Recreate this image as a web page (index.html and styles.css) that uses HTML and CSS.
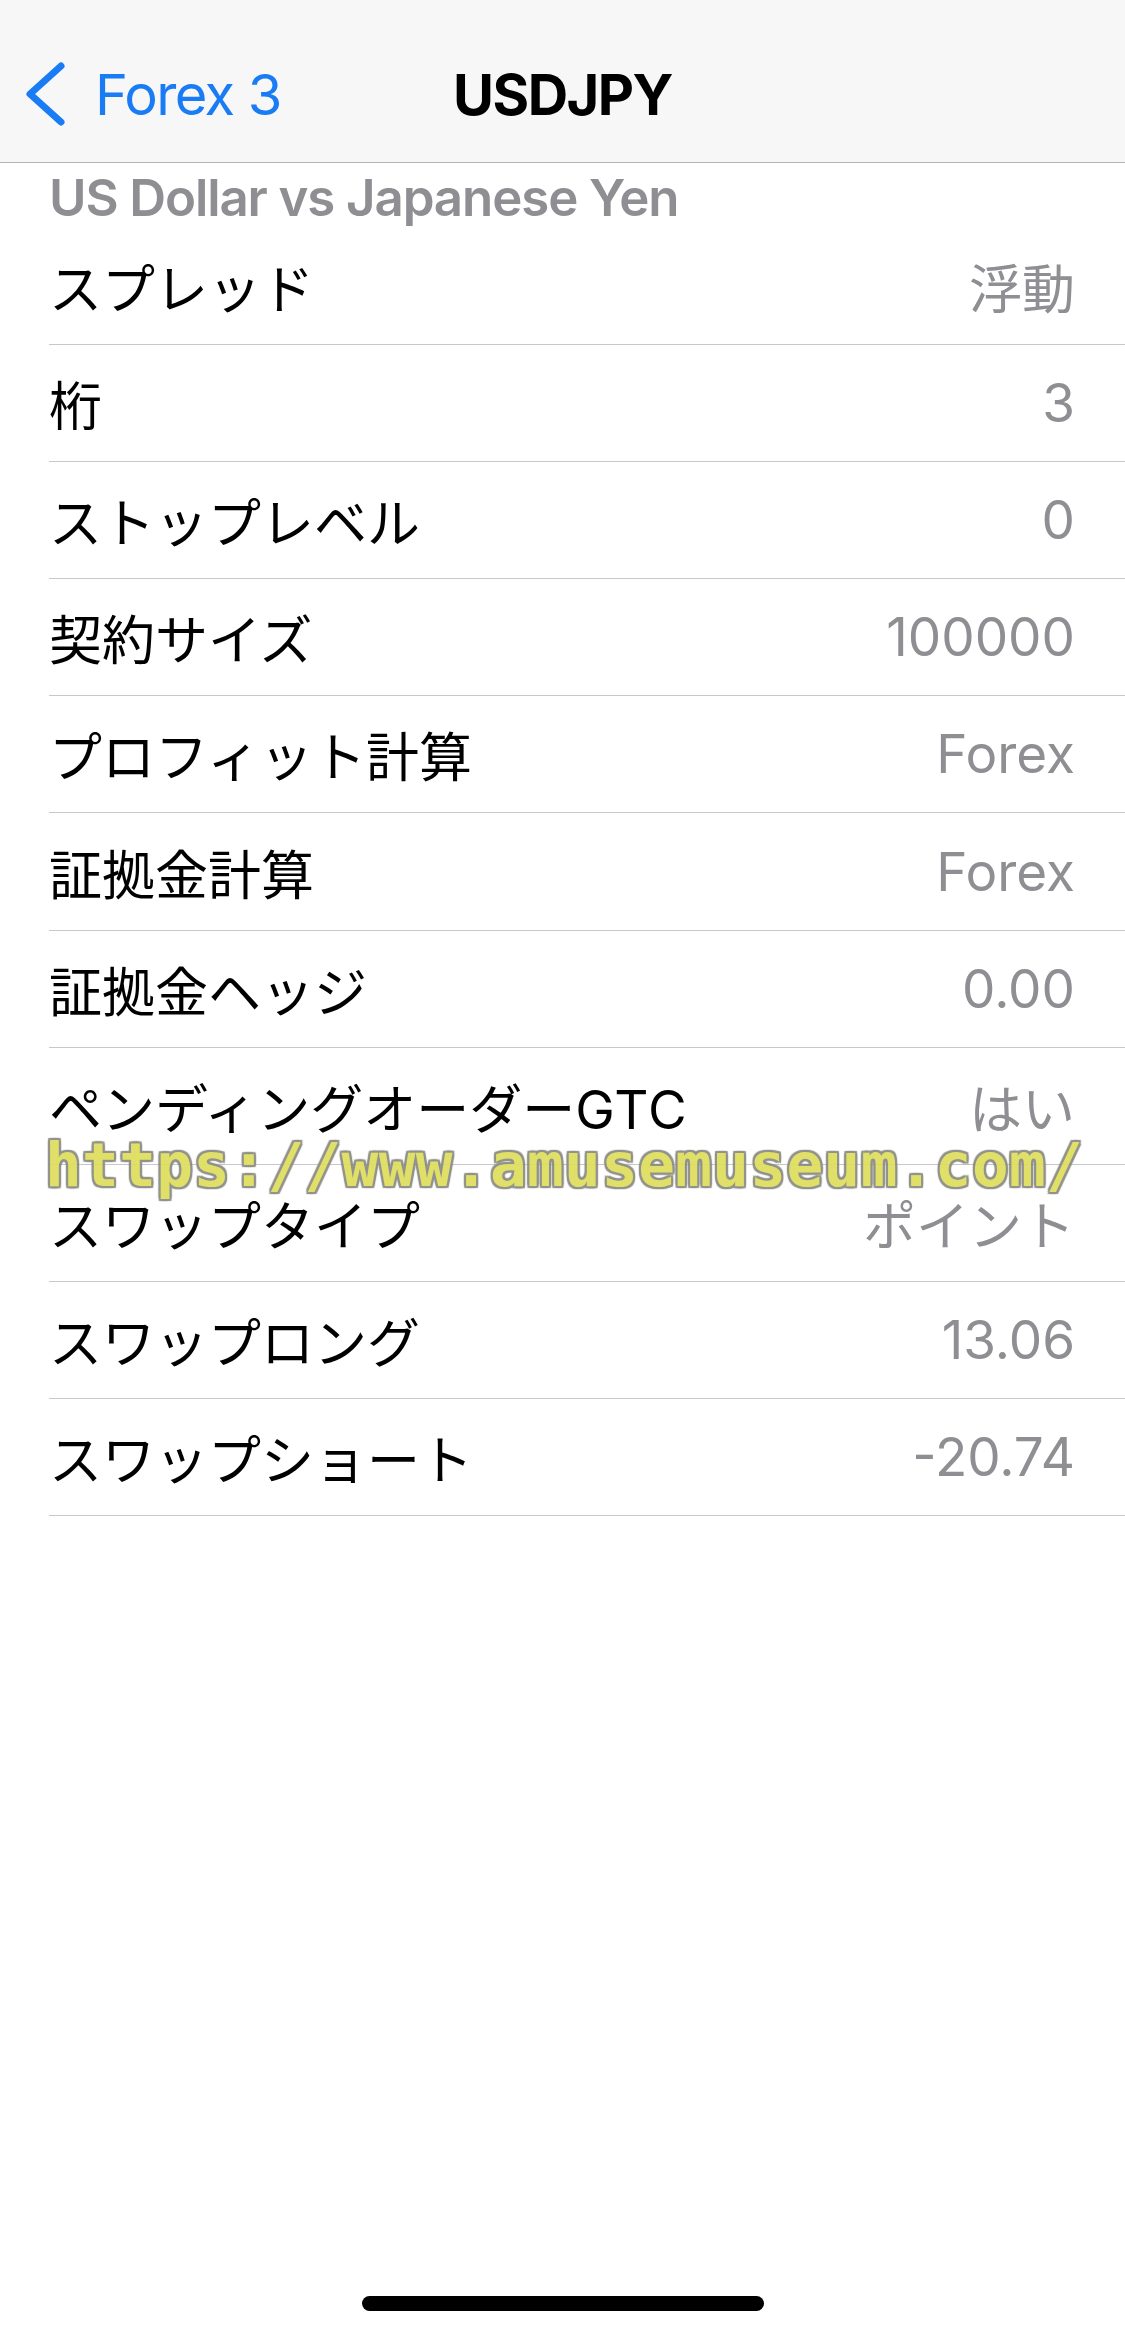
FILE: index.html
```html
<!DOCTYPE html>
<html lang="ja">
<head>
    <meta charset="UTF-8">
    <meta name="viewport" content="width=device-width, initial-scale=1.0">
    <title>USDJPY</title>
    <link rel="stylesheet" href="styles.css">
</head>
<body>
    <div class="screen">
        <header class="navbar">
            <a class="back" href="#">
                <svg class="chevron" width="44" height="70" viewBox="0 0 44 70">
                    <polyline points="37,6 6,34 37,62" fill="none" stroke="#1a7cf5" stroke-width="7" stroke-linecap="round" stroke-linejoin="round"/>
                </svg>
                <span>Forex 3</span>
            </a>
            <h1 class="title">USDJPY</h1>
            <div></div>
        </header>

        <div class="symbol-name">US Dollar vs Japanese Yen</div>

        <ul class="spec-list">
            <li><span class="label">スプレッド</span><span class="value">浮動</span></li>
            <li><span class="label">桁</span><span class="value">3</span></li>
            <li><span class="label">ストップレベル</span><span class="value">0</span></li>
            <li><span class="label">契約サイズ</span><span class="value">100000</span></li>
            <li><span class="label">プロフィット計算</span><span class="value">Forex</span></li>
            <li><span class="label">証拠金計算</span><span class="value">Forex</span></li>
            <li><span class="label">証拠金ヘッジ</span><span class="value">0.00</span></li>
            <li><span class="label">ペンディングオーダー<span class="latin">GTC</span></span><span class="value">はい</span></li>
            <li><span class="label">スワップタイプ</span><span class="value">ポイント</span></li>
            <li><span class="label">スワップロング</span><span class="value">13.06</span></li>
            <li><span class="label">スワップショート</span><span class="value">-20.74</span></li>
        </ul>

        <div class="home-bar"></div>

        <div class="watermark">https://www.amusemuseum.com/</div>
    </div>
</body>
</html>
```

FILE: styles.css
```css
body {
    margin: 0;
    background: #ffffff;
    font-family: Inter, "Noto Sans CJK JP", sans-serif;
}
.screen {
    position: relative;
    width: 1125px;
    min-height: 2335px;
    display: flex;
    flex-direction: column;
}
.navbar {
    height: 163px;
    box-sizing: border-box;
    padding-top: 27px;
    background-color: #f7f7f7;
    border-bottom: 1px solid #b4b4b4;
    display: grid;
    grid-template-columns: 1fr auto 1fr;
    align-items: center;
}
.back {
    display: flex;
    align-items: center;
    gap: 27px;
    padding-left: 24px;
    color: #1a7cf5;
    text-decoration: none;
    font-size: 56px;
    letter-spacing: -1.6px;
}
.chevron {
    display: block;
}
.title {
    margin: 0;
    font-size: 56px;
    font-weight: 700;
    letter-spacing: -1.5px;
    color: #000;
}
.symbol-name {
    height: 65px;
    box-sizing: border-box;
    padding: 4px 0 0 49px;
    font-size: 51px;
    line-height: 61px;
    font-weight: 600;
    letter-spacing: -1.1px;
    color: #8e8e93;
}
.spec-list {
    list-style: none;
    margin: 0;
    padding: 0 0 0 49px;
}
.spec-list li {
    height: 117.1px;
    box-sizing: border-box;
    border-bottom: 1px solid #c8c7cc;
    padding-right: 50px;
    display: flex;
    align-items: center;
    justify-content: space-between;
    font-size: 53px;
}
.label {
    color: #000;
}
.latin {
    letter-spacing: 1px;
}
.value {
    color: #8e8e93;
}
.home-bar {
    width: 402px;
    height: 15px;
    border-radius: 8px;
    background: #000;
    margin: auto auto 24px;
}
.watermark {
    position: absolute;
    top: 1134px;
    left: 45px;
    font-family: "DejaVu Sans Mono", monospace;
    font-weight: 700;
    font-size: 61px;
    letter-spacing: 0.35px;
    line-height: 1;
    color: #dede5c;
    text-shadow: 0 0 1px #8a8a84, 2px 0 1px #8a8a84, -2px 0 1px #8a8a84, 0 2px 1px #8a8a84, 0 -2px 1px #8a8a84, 2px 2px 1px #8a8a84, -2px -2px 1px #8a8a84, 2px -2px 1px #8a8a84, -2px 2px 1px #8a8a84;
    opacity: 0.92;
}
```
